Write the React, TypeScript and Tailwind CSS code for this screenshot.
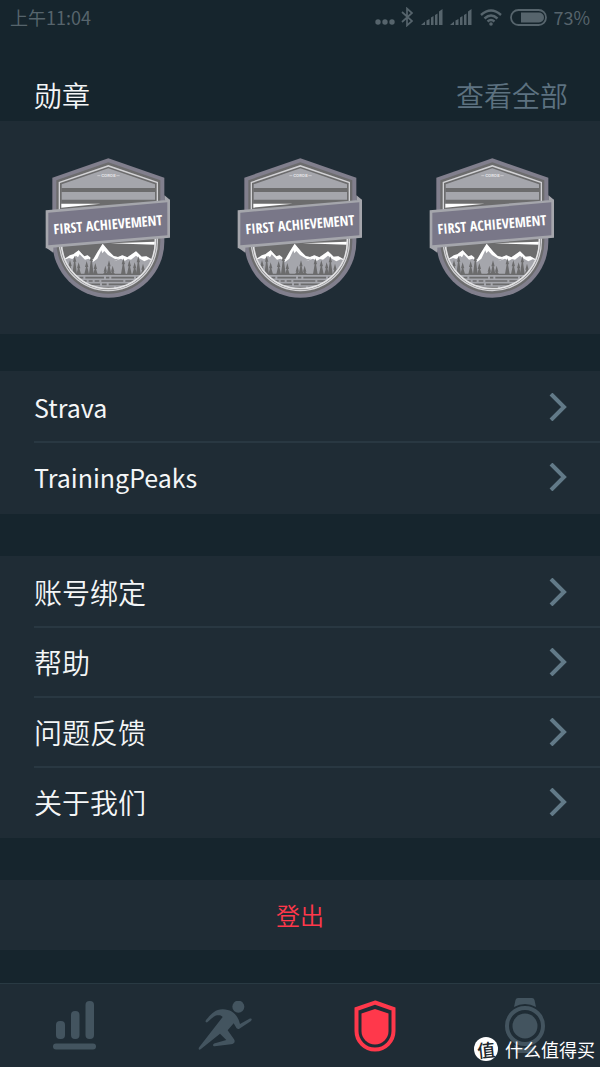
import React from 'react';

const integrations = ['Strava', 'TrainingPeaks'];
const settings = ['账号绑定', '帮助', '问题反馈', '关于我们'];

const trees = [
  [108, 345], [122, 332], [134, 352], [158, 348], [172, 330], [184, 354], [214, 362], [225, 346], [236, 362],
  [268, 340], [286, 346], [302, 352], [313, 334], [327, 356],
];

const water = [
  'M80 398H130M136 398H148M154 398H210M216 398H226M232 398H300M306 398H318M324 398H366',
  'M80 408H158M164 408H176M182 408H196M202 408H268M274 408H366',
  'M80 418H144M150 418H198M204 418H218M224 418H282M288 418H366',
  'M100 428H176M182 428H240M246 428H340',
];

const Badge = ({ id }: { id: string }) => (
  <svg viewBox="33 36 378 426" className="h-[142px] w-[126px]" role="img" aria-label="First Achievement">
    <clipPath id={id}>
      <path d="M223 70L363 118V290A140 140 0 0 1 83 290V118Z" />
    </clipPath>
    <path d="M223 40L391 98V290A168 168 0 0 1 55 290V98Z" fill="#817f8d" />
    <path d="M223 52L379 106V290A156 156 0 0 1 67 290V106Z" fill="#6c6c6d" />
    <path d="M223 60L372 111V290A149 149 0 0 1 74 290V111Z" fill="#d2d2d5" />
    <path d="M223 65L368 114V290A145 145 0 0 1 78 290V114Z" fill="#6c6c6d" />
    <path d="M223 70L363 118V290A140 140 0 0 1 83 290V118Z" fill="#a5a6ac" />
    <path d="M82 129H364V141H82ZM82 164H364V176L82 200Z" fill="#6c6c6d" />
    <path d="M82 176L200 176L82 188Z" fill="#fff" />
    <path d="M190 92H199M247 92H257" stroke="#dcdce0" strokeWidth="2" />
    <text x="223" y="96" textAnchor="middle" fontSize="12" fill="#e5e5e8" className="font-['Inter'] font-bold">COROS</text>

    <g clipPath={`url(#${id})`}>
      <path d="M82 280H364V350H82Z" fill="#6c6c6d" />
      <path d="M230 295L364 290V299Z" fill="#fff" />
      <path d="M82 348L108 330L118 328L134 316L151 334L161 331L177 344L190 322L206 296L226 320L239 333L252 336L265 331L280 337L306 319L323 335L337 334L366 348V436H82Z" fill="#a5a6ac" />
      <path d="M86 346L108 331L118 328L134 316L151 334L161 331L177 344L190 322L206 296L226 320L239 333L252 336L265 331L280 337L306 319L323 335L337 334L360 347L344 343L331 349L319 342L306 332L291 344L282 342L273 347L261 341L240 349L256 341L243 342L222 330L211 318L205 325L202 316L190 341L178 350L164 341L153 344L137 328L132 337L126 332L115 342L105 339Z" fill="#fff" />
      {trees.map(([x, y]) => (
        <path
          key={x}
          d={`M${x} ${y}L${x + 5} ${y + 18}H${x + 2}L${x + 7} 388H${x - 7}L${x - 2} ${y + 18}H${x - 5}Z`}
          fill="#6c6c6d"
        />
      ))}
      <path d="M82 388H364" stroke="#6c6c6d" strokeWidth="4" />
      {water.map((d) => (
        <path key={d} d={d} stroke="#6c6c6d" strokeWidth="5" />
      ))}
    </g>
    <path d="M82 280V290A141 141 0 0 0 364 290V280" fill="none" stroke="#e2e2e4" strokeWidth="5" />

    <path d="M391 150L408 165L391 170ZM38 308L58 324V304Z" fill="#817f8d" />
    <path d="M392 152L408 165H392ZM36 308L58 322V305Z" fill="#a5a6ac" />
    <path d="M35 196L408 164V278L35 310Z" fill="#a5a6ac" />
    <path d="M43 203L400 172V271L43 301Z" fill="#797788" />
    <text
      x="222"
      y="254"
      textAnchor="middle"
      fontSize="42"
      fill="#fff"
      transform="rotate(-4.9 222 238)"
      className="font-['Open_Sans_Condensed','Noto_Sans_ExtraCondensed','Liberation_Sans_Narrow',sans-serif] font-bold"
    >
      FIRST ACHIEVEMENT
    </text>
  </svg>
);

const Chevron = () => (
  <svg viewBox="0 0 18 28" className="h-7 w-[18px]" fill="none" stroke="#627a88" strokeWidth="4" aria-hidden="true">
    <path d="M2 1L15 14L2 27" />
  </svg>
);

const Signal = () => (
  <svg viewBox="0 0 22 16" className="h-4 w-[22px]" fill="currentColor" aria-hidden="true">
    <path d="M0 16L4 12.500V16ZM5.500 11.500L8.500 10V16H5.500ZM10 8.500L12.500 7V16H10ZM14 6L16.500 4.500V16H14ZM18 2.500L21.500 0V16H18Z" />
  </svg>
);

const StatusBar = () => (
  <div className="flex h-[34px] items-center justify-between px-[10px] text-lg text-[#56646c]">
    <span>上午11:04</span>
    <div className="flex items-center">
      <svg viewBox="0 0 20 16" className="mr-[6px] h-4 w-5" fill="currentColor" aria-hidden="true">
        <circle cx="3" cy="13" r="2.700" />
        <circle cx="10" cy="13" r="2.700" />
        <circle cx="17" cy="13" r="2.700" />
      </svg>
      <svg viewBox="0 0 12 20" className="mr-2 h-5 w-3" fill="none" stroke="currentColor" strokeWidth="1.700" aria-hidden="true">
        <path d="M1 5L11 14L6 18.500V1.500L11 6L1 15" />
      </svg>
      <div className="mr-2 flex gap-[7px]">
        <Signal />
        <Signal />
      </div>
      <svg viewBox="0 0 22 17" className="mr-2 h-[17px] w-[22px]" fill="none" stroke="currentColor" strokeWidth="2.400" aria-hidden="true">
        <path d="M1 6Q11 -3 21 6M4.500 9.500Q11 3.500 17.500 9.500M7.500 12.500Q11 9.500 14.500 12.500" />
        <circle cx="11" cy="15" r="1.800" fill="currentColor" stroke="none" />
      </svg>
      <svg viewBox="0 0 37 17" className="mr-[6px] h-[17px] w-[37px]" aria-hidden="true">
        <rect x="1" y="1" width="35" height="15" rx="7.500" fill="none" stroke="currentColor" strokeWidth="1.800" />
        <path d="M11 3.500H29A5 5 0 0 1 29 13.500H11Z" fill="currentColor" />
      </svg>
      <span>73%</span>
    </div>
  </div>
);

const MenuList = ({ items, className }: { items: string[]; className: string }) => (
  <ul className={`bg-[#1f2c35] pt-[2px] pl-[34px] ${className}`}>
    {items.map((item) => (
      <li key={item} className="border-b-2 border-[#293842] last:border-b-0">
        <a href="#" className="flex h-[68px] items-center justify-between pr-[33px]">
          {item}
          <Chevron />
        </a>
      </li>
    ))}
  </ul>
);

const TabBar = () => (
  <nav className="relative grid h-[84px] grid-cols-4 border-t border-[#293a43] bg-[#1f2c35] text-[#43545f]">
    <a href="#" aria-label="Data" className="flex items-center justify-center">
      <svg viewBox="0 0 56 52" className="h-[52px] w-14" fill="currentColor">
        <rect x="9" y="21" width="9" height="18" rx="4" />
        <rect x="24" y="11" width="8.500" height="28" rx="4" />
        <rect x="38.500" y="1" width="8.500" height="38" rx="4" />
        <rect x="6" y="43.500" width="43" height="6" rx="3" />
      </svg>
    </a>
    <a href="#" aria-label="Sport" className="flex items-center justify-center">
      <svg viewBox="594 76 164 150" className="h-[50px] w-14" fill="currentColor">
        <circle cx="716" cy="93" r="18" />
        <path d="M619 133C633 117 646 100 670 101C696 102 714 116 721 145L748 130C756 126 759 132 753 137L719 159C715 161 711 159 709 155L702 143L684 164L703 191C708 198 703 205 694 206L645 212C638 212 639 205 646 203L680 193L661 174L603 221C597 224 595 219 599 214L669 124C665 118 659 118 653 119C641 121 633 132 623 140C618 142 616 137 619 133Z" />
      </svg>
    </a>
    <a href="#" aria-label="Profile" aria-current="page" className="flex items-center justify-center text-[#ff384b]">
      <svg viewBox="0 0 42 52" className="h-[52px] w-[42px]">
        <path d="M21 2.500L39.500 9V31A18.500 18.500 0 0 1 2.500 31V9Z" fill="none" stroke="currentColor" strokeWidth="4" />
        <path d="M21 9L34.500 13.500V31A13.500 13.500 0 0 1 7.500 31V13.500Z" fill="currentColor" />
      </svg>
    </a>
    <a href="#" aria-label="Watch" className="flex items-center justify-center">
      <svg viewBox="0 0 42 56" className="h-14 w-[42px]" fill="currentColor">
        <path d="M14 0H28Q30 0 30.500 2L32 9Q21 3 10 9L11.500 2Q12 0 14 0ZM12 55H30L32 47Q21 53 10 47Z" />
        <circle cx="21" cy="28" r="18" fill="none" stroke="currentColor" strokeWidth="4" />
        <circle cx="21" cy="28" r="12.500" />
      </svg>
    </a>
    <div className="absolute right-[5px] bottom-1 flex items-center gap-[7px] text-lg text-white">
      <span className="flex size-6 items-center justify-center rounded-full bg-white text-lg font-medium text-[#20262b]">
        <span className="-rotate-6">值</span>
      </span>
      <span className="leading-7">什么值得买</span>
    </div>
  </nav>
);

const App = () => {
  return (
    <div className="flex min-h-screen flex-col bg-[#16252d] font-['Noto_Sans_CJK_SC',sans-serif] text-[28px] leading-10 text-[#f4f6f7]">
      <StatusBar />

      <header className="flex h-[87px] items-end justify-between pr-8 pb-[6px] pl-[34px] font-[350]">
        <h1 className="font-[350]">勋章</h1>
        <a href="#" className="text-[#5d7280]">查看全部</a>
      </header>

      <section className="grid h-[213px] grid-cols-3 justify-items-center bg-[#1f2c35] px-3 pt-9">
        <Badge id="badge-1" />
        <Badge id="badge-2" />
        <Badge id="badge-3" />
      </section>

      <main className="mt-[37px] mb-8 flex flex-col gap-[42px]">
        <MenuList items={integrations} className="pb-[3px] text-[25px]" />
        <MenuList items={settings} className="pb-[2px] font-[350]" />
        <button type="button" className="h-[70px] w-full bg-[#1f2c35] text-2xl font-[350] text-[#ff384b]">
          登出
        </button>
      </main>

      <div className="mt-auto">
        <TabBar />
      </div>
    </div>
  );
};

export default App;
